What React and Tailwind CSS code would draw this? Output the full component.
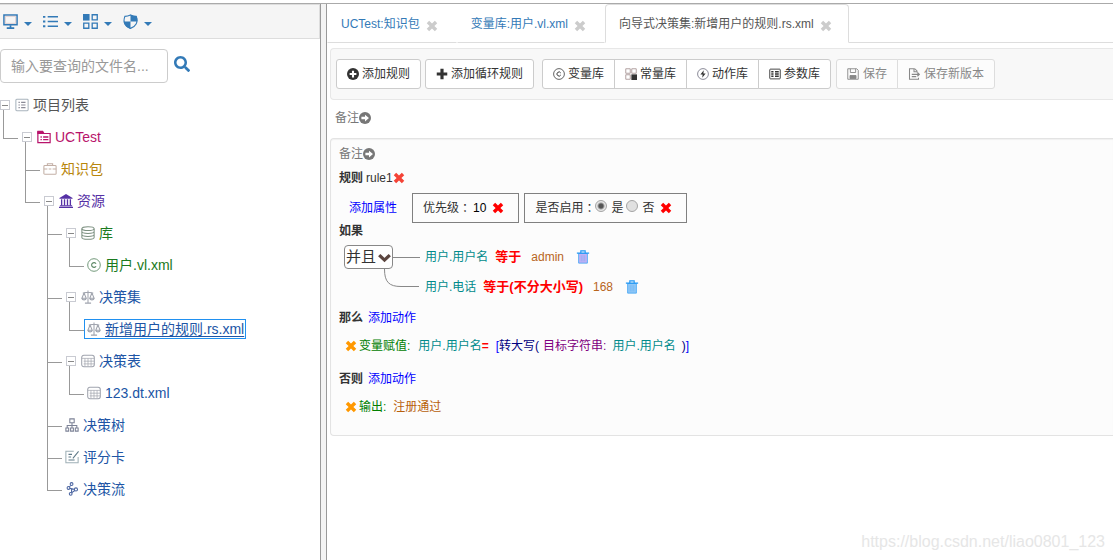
import clsx from 'clsx'
import { FaSearch } from 'react-icons/fa'

function Svg({ className, children }) {
  return (
    <svg
      viewBox="0 0 16 16"
      fill="none"
      stroke="currentColor"
      strokeWidth="1.2"
      aria-hidden="true"
      className={clsx('shrink-0', className)}
    >
      {children}
    </svg>
  )
}

function Cross({ className }) {
  return (
    <Svg className={className}>
      <path
        fill="currentColor"
        stroke="none"
        d="M4.2 1 8 4.8 11.8 1 15 4.2 11.2 8 15 11.8 11.8 15 8 11.2 4.2 15 1 11.8 4.8 8 1 4.2Z"
      />
    </Svg>
  )
}

const glyphs = {
  desktop: (
    <>
      <path d="M1 1h14v10.500H1Z" strokeWidth="1.600" />
      <path d="M8 12v2M4 15h8" strokeWidth="1.800" />
      <path d="M2.500 2.500h11v7.500h-11Z" fill="#f5f5f5" stroke="#d9c4c4" strokeWidth=".8" />
    </>
  ),
  list: (
    <>
      <path d="M5 3h11M5 8h11M5 13h11" strokeWidth="1.600" />
      <path d="M0 3h2.500M0 8h2.500M0 13h2.500" strokeWidth="2" />
    </>
  ),
  grid: (
    <>
      <path d="M0 0h7v7H0Z" fill="currentColor" stroke="none" />
      <path d="M9.800.8h5.400v5.400H9.800ZM.8 9.800h5.400v5.400H.8ZM9.800 9.800h5.400v5.400H9.800Z" strokeWidth="1.400" />
    </>
  ),
  shield: (
    <>
      <path d="M8 1C10 2 12 2.500 14 2.500 16.500 9 13.500 13.500 8 15.300 2.500 13.500-.5 9 2 2.500 4 2.500 6 2 8 1Z" />
      <path d="M8 .4C10 1.600 12 2 14.500 2 15.500 4 15.600 6 15.300 8H8ZM8 8V16C4 14.600 1.200 12 .7 8Z" fill="currentColor" stroke="none" />
    </>
  ),
  project: (
    <>
      <rect x="1" y="1.500" width="14" height="13" rx="1" stroke="#a9b4bd" />
      <path d="M4 5h1.500M4 8h1.500M4 11h1.500M7 5h5M7 8h5M7 11h5" stroke="#8a8a96" />
    </>
  ),
  folder: (
    <>
      <path d="M1 14.500V2h5l1 2h8v10.500Z" strokeWidth="1.400" />
      <path d="M1 1.500h5.500L8 4H1Z" fill="currentColor" />
      <path d="M4 8h1.500M7 8h6M4 11h1.500M7 11h6" strokeWidth="1.500" />
    </>
  ),
  briefcase: (
    <>
      <rect x="1" y="4" width="14" height="10" rx="1" />
      <path d="M5 4V2h6v2M1 8h4M6.500 8h3M11 8h4" />
    </>
  ),
  bank: (
    <>
      <path d="M8 0 15.500 4.500v1H.5v-1Z" fill="currentColor" stroke="none" />
      <path d="M3 6v7M6.300 6v7M9.700 6v7M13 6v7" strokeWidth="1.500" />
      <path d="M1 13.500h14M0 15.300h16" />
    </>
  ),
  database: (
    <>
      <ellipse cx="8" cy="3" rx="7" ry="2.200" />
      <path d="M1 3v10c0 3 14 3 14 0V3M1 6.300c0 3 14 3 14 0M1 9.700c0 3 14 3 14 0" />
    </>
  ),
  copyright: (
    <>
      <circle cx="8" cy="8" r="7.200" strokeWidth="1" />
      <path d="M10.300 6.600A2.700 2.700 0 1 0 10.300 9.400" strokeWidth="1.300" />
    </>
  ),
  scale: (
    <path d="M8 .5v14M4.500 15h7M2 3.500c3 0 4-1 6-1s3 1 6 1M3.500 3.500 1 9.500h5ZM12.500 3.500 10 9.500h5ZM1 9.500c.5 2.400 4.500 2.400 5 0M10 9.500c.5 2.400 4.500 2.400 5 0" />
  ),
  table: (
    <>
      <rect x=".8" y="1.500" width="14.400" height="13" rx="2.500" />
      <path d="M1 5h14M3 8.200h12M3 11.300h12M4.500 5v9M8 5v9M11.500 5v9" strokeWidth=".8" />
    </>
  ),
  tree: (
    <path d="M5.500 1h5v4.500h-5ZM8 5.500v6M2.500 11.500V8.500h11v3M1 11.500h3.200V15H1ZM6.400 11.500h3.200V15H6.400ZM11.800 11.500H15V15h-3.200Z" />
  ),
  card: (
    <>
      <path d="M10 1.500H1v13h14V8" stroke="#9fb0b6" />
      <path d="M4 5h4M4 8h3M4 11.500h7M9 9.500l6.500-8" />
    </>
  ),
  flow: (
    <>
      <circle cx="7.500" cy="2.300" r="1.600" />
      <circle cx="4" cy="6.800" r="1.600" />
      <circle cx="12.500" cy="8.500" r="1.800" />
      <circle cx="6.500" cy="13.500" r="1.600" />
      <path d="M6.500 4 5 5.500M5.500 7.300l5 1M7.500 12.500l3.700-2.800M7.500 7.500V12" />
    </>
  ),
  constant: (
    <>
      <path d="M1 1h6v6H1ZM9 1h6v6H9ZM1 9h6v6H1Z" stroke="#a99" />
      <path d="M8.500 8.500H16V16H8.500Z" fill="currentColor" stroke="none" />
    </>
  ),
  action: (
    <>
      <circle cx="8" cy="8" r="7.200" stroke="#667" strokeWidth="1" />
      <path d="M9 3 4.500 8.800h3L7 13l4.500-5.800h-3Z" fill="currentColor" stroke="none" />
    </>
  ),
  params: (
    <>
      <rect x="1" y="1.500" width="14" height="13" rx="1" />
      <path d="M3 5h3M3 8h3M3 11h3M8 5h5M8 8h5M8 11h5" strokeWidth="2" />
    </>
  ),
  save: (
    <>
      <path d="M1 1h12l2 2v12H1ZM4.500 1v5h7V1" />
      <path d="M4 10h8v4H4Z" fill="currentColor" />
    </>
  ),
  saveAs: (
    <>
      <path d="M9 1H2v14h12v-2M9 1l3 3v2M8 1v4h4" strokeWidth="1.400" />
      <path d="M5 8.500h10M5 11.500h6M12.500 6l2.500 2.500-2.500 2.500" strokeWidth="1.600" />
    </>
  ),
  plus: <path d="M8 1v14M1 8h14" strokeWidth="4.200" />,
  plusCircle: (
    <>
      <circle cx="8" cy="8" r="8" fill="currentColor" stroke="none" />
      <path d="M8 3.500v9M3.500 8h9" stroke="#fff" strokeWidth="2.800" />
    </>
  ),
  arrowCircle: (
    <>
      <circle cx="8" cy="8" r="8" fill="currentColor" stroke="none" />
      <path d="M8 3.500 13.300 8 8 12.500V9.800H3.200V6.200H8Z" fill="#fff" stroke="none" />
    </>
  ),
  chevron: <path d="M1.500 5 8 11.200 14.500 5" strokeWidth="4" />,
}

const menus = [
  ['desktop', '视图'],
  ['list', '列表'],
  ['grid', '分类'],
  ['shield', '权限'],
]

const tree = {
  icon: 'project',
  label: '项目列表',
  color: 'text-[#555]',
  children: [
    {
      icon: 'folder',
      label: 'UCTest',
      color: 'text-[#b8136b]',
      iconColor: 'text-[#b8136b]',
      children: [
        { icon: 'briefcase', label: '知识包', color: 'text-[#b8860b]', iconColor: 'text-[#c3b0a6]' },
        {
          icon: 'bank',
          label: '资源',
          color: 'text-[#5530a5]',
          iconColor: 'text-[#5530a5]',
          children: [
            {
              icon: 'database',
              label: '库',
              color: 'text-[#1a7a20]',
              iconColor: 'text-[#7c9080]',
              children: [
                { icon: 'copyright', label: '用户.vl.xml', color: 'text-[#1a7a20]', iconColor: 'text-[#5f8a68]' },
              ],
            },
            {
              icon: 'scale',
              label: '决策集',
              color: 'text-[#2055a5]',
              children: [
                { icon: 'scale', label: '新增用户的规则.rs.xml', color: 'text-[#2055a5]', active: true },
              ],
            },
            {
              icon: 'table',
              label: '决策表',
              color: 'text-[#2055a5]',
              children: [{ icon: 'table', label: '123.dt.xml', color: 'text-[#2055a5]' }],
            },
            { icon: 'tree', label: '决策树', color: 'text-[#2055a5]', iconColor: 'text-[#7c8296]' },
            { icon: 'card', label: '评分卡', color: 'text-[#2055a5]', iconColor: 'text-[#5f7a88]' },
            { icon: 'flow', label: '决策流', color: 'text-[#2055a5]', iconColor: 'text-[#4a64a0]' },
          ],
        },
      ],
    },
  ],
}

function TreeNode({ node }) {
  const { icon, label, color, iconColor = 'text-[#a0a4ae]', active, children } = node

  return (
    <div>
      <div className="flex h-8">
        {children && (
          <div className="mr-1 flex w-[10px] flex-col pt-[11px]">
            <button
              type="button"
              aria-label={`折叠${label}`}
              className="flex size-[10px] items-center border border-[#c9cbd2] px-px"
            >
              <span className="h-px w-full bg-[#888]" />
            </button>
            <span className="ml-[3px] flex-1 border-l border-[#999]" />
          </div>
        )}
        <a
          href="#"
          className={clsx(
            'my-auto flex h-5 items-center gap-1 whitespace-nowrap border pr-px text-sm leading-[18px]',
            !children && 'pl-0.5',
            active ? 'border-[#2090f0]' : 'border-transparent',
            color,
          )}
        >
          <Svg className={clsx('size-[14px]', iconColor)}>{glyphs[icon]}</Svg>
          <span className={clsx(active && 'underline underline-offset-2')}>{label}</span>
        </a>
      </div>
      {children && (
        <ul className="pl-[3px]">
          {children.map((child, i) => (
            <li key={child.label} className="flex">
              <div className={clsx('flex w-[15px] shrink-0 flex-col', child.children && 'mr-1')}>
                <span className="h-[18px] border-b border-l border-[#999]" />
                {i < children.length - 1 && <span className="flex-1 border-l border-[#999]" />}
              </div>
              <TreeNode node={child} />
            </li>
          ))}
        </ul>
      )}
    </div>
  )
}

function Sidebar() {
  return (
    <aside className="w-80 shrink-0">
      <div className="flex h-[35px] items-center border-y border-r border-[#ddd] bg-[#f5f5f5] pl-[3px] text-[#337ab7]">
        {menus.map(([icon, label]) => (
          <button key={icon} type="button" aria-label={label} className="flex w-10 items-center gap-1.5">
            <Svg className="size-[15px]">{glyphs[icon]}</Svg>
            <span className="mt-1 border-x-4 border-t-4 border-x-transparent border-t-[#337ab7]" />
          </button>
        ))}
      </div>
      <form className="mt-2.5 flex gap-1.5">
        <input
          type="text"
          aria-label="文件名"
          placeholder="输入要查询的文件名..."
          className="h-[34px] w-[168px] rounded border border-[#ccc] px-2.5 text-sm placeholder:text-[#999]"
        />
        <button type="button" aria-label="查询" className="pb-1 text-[#337ab7]">
          <FaSearch className="size-4" />
        </button>
      </form>
      <nav className="pt-1.5">
        <TreeNode node={tree} />
      </nav>
    </aside>
  )
}

function Tab({ label, active }) {
  return (
    <div
      className={clsx(
        'flex h-[39px] items-center gap-1.5 border pl-[13px]',
        active
          ? 'rounded-t border-[#ddd] border-b-white bg-white pr-4 text-[#555]'
          : 'border-transparent border-b-[#ddd] pr-[18px] text-[#337ab7]',
      )}
    >
      <button type="button" className="whitespace-nowrap">{label}</button>
      <button type="button" aria-label={`关闭${label}`} className="mt-1 text-[#ccc]">
        <Cross className="size-3" />
      </button>
    </div>
  )
}

function ToolButton({ icon, disabled, children }) {
  return (
    <button
      type="button"
      disabled={disabled}
      className={clsx(
        '-ml-px flex h-[30px] items-center whitespace-nowrap border px-2.5 first:ml-0 first:rounded-l-[3px] last:rounded-r-[3px]',
        disabled ? 'gap-1 border-[#ddd] bg-[#fcfcfc] text-[#888]' : 'gap-[3px] border-[#ccc] bg-white text-[#333]',
      )}
    >
      <Svg className="size-3">{glyphs[icon]}</Svg>
      {children}
    </button>
  )
}

function Remark() {
  return (
    <button type="button" className="flex h-[18px] items-center text-[#777]">
      备注
      <Svg className="size-3">{glyphs.arrowCircle}</Svg>
    </button>
  )
}

function Remove({ label, className = 'text-[#f00]' }) {
  return (
    <button type="button" aria-label={label} className={className}>
      <Cross className="size-3" />
    </button>
  )
}

function Colon() {
  return <span className="font-['Noto_Sans_CJK_TC',sans-serif]">：</span>
}

function Condition({ field, op, value, fill }) {
  return (
    <li className="flex h-[30px] items-center whitespace-nowrap">
      <span className="text-[#008b8b]">{field}</span>
      <button type="button" className="ml-[7px] text-[13px] font-bold text-[#f00]">{op}</button>
      <span className="ml-2.5 text-[#b8651b]">{value}</span>
      <button type="button" aria-label="删除条件" className="ml-3">
        <Svg className="size-[14px] text-[#4aa8f5]">
          <path d="M3 4h10v11H3Z" className={fill} strokeWidth="1" />
          <path d="M1 3.500h14M5.500 3V1h5v2" stroke="#2196f3" strokeWidth="1.300" />
          <path d="M6 6v7M8 6v7M10 6v7" strokeWidth=".4" />
        </Svg>
      </button>
    </li>
  )
}

function RulePanel() {
  return (
    <section className="ml-[3px] mt-[11px] h-[298px] rounded-l border border-r-0 border-[#e3e3e3] bg-[#fcfcfc] pl-2 pt-1.5 shadow-[inset_0_1px_1px_rgba(0,0,0,0.05)]">
      <Remark />
      <div className="mt-1.5 flex h-[18px] items-center">
        <b className="mr-[3px]">规则</b>rule1
        <Remove label="删除规则" className="text-[#f44336]" />
      </div>

      <div className="mt-1.5 flex h-[30px] items-center whitespace-nowrap pl-2.5">
        <a href="#" className="mr-[15px] text-[#00f]">添加属性</a>
        <div className="mr-[5px] flex h-full items-center border border-[#808080] px-2.5">
          优先级
          <Colon />
          <span className="ml-0.5 mr-1.5 text-black">10</span>
          <Remove label="删除优先级" />
          <span className="w-1" />
        </div>
        <div className="flex h-full items-center border border-[#808080] px-2.5">
          是否启用
          <Colon />
          <label className="flex items-center gap-1">
            <input
              type="radio"
              name="enabled"
              defaultChecked
              className="mb-1 size-3 appearance-none rounded-full border border-[#a5a5a5] bg-[#e6e6e6] checked:bg-[radial-gradient(circle,#555_0_2px,#e6e6e6_4px)]"
            />
            是
          </label>
          <label className="ml-[3px] flex items-center gap-1">
            <input
              type="radio"
              name="enabled"
              className="mb-1 size-3 appearance-none rounded-full border border-[#a5a5a5] bg-[#e0e0e0] checked:bg-[radial-gradient(circle,#555_0_2px,#e6e6e6_4px)]"
            />
            否
          </label>
          <span className="w-1.5" />
          <Remove label="删除是否启用" />
          <span className="w-1" />
        </div>
      </div>

      <b className="block leading-4">如果</b>
      <div className="flex pl-[5px]">
        <div className="w-[81px] pt-1.5">
          <div className="flex items-center">
            <label className="flex h-6 w-[49px] items-center gap-px rounded border border-[#888] bg-white pl-px">
              <select aria-label="条件关系" className="w-[31px] appearance-none text-[15px] leading-5">
                <option>并且</option>
                <option>或者</option>
              </select>
              <Svg className="size-[13px] text-[#5c4640]">{glyphs.chevron}</Svg>
            </label>
            <span className="w-[27px] border-t border-[#888]" />
          </div>
          <svg viewBox="0 0 36 19" fill="none" stroke="#888" className="ml-10 h-[19px] w-9" aria-hidden="true">
            <path d="M.5 0C.5 13 5 17.500 17 17.500H35" />
          </svg>
        </div>
        <ul className="pt-[3px]">
          <Condition field="用户.用户名" op="等于" value="admin" fill="fill-[#c3b1f5]" />
          <Condition field="用户.电话" op="等于(不分大小写)" value="168" fill="fill-[#8fc7f7]" />
        </ul>
      </div>

      <div className="mt-[7px] flex h-[18px] items-center gap-[5px]">
        <b>那么</b>
        <a href="#" className="text-[#00f]">添加动作</a>
      </div>
      <div className="mt-2.5 flex h-[18px] items-center whitespace-nowrap pl-1.5">
        <Remove label="删除动作" className="mr-0.5 text-[#ff9800]" />
        <span className="mr-2 text-[#008000]">变量赋值:</span>
        <span className="text-[#008b8b]">用户.用户名</span>
        <b className="mr-[7px] text-[#f00]">=</b>
        <span className="text-[#00f]">[</span>
        <span className="mr-1 text-[#000080]">转大写(</span>
        <span className="mr-1.5 text-[#800080]">目标字符串:</span>
        <span className="mr-1.5 text-[#008b8b]">用户.用户名</span>
        <span className="text-[#000080]">)</span>
        <span className="text-[#00f]">]</span>
      </div>
      <div className="mt-[15px] flex h-[18px] items-center gap-[5px]">
        <b>否则</b>
        <a href="#" className="text-[#00f]">添加动作</a>
      </div>
      <div className="mt-2.5 flex h-[18px] items-center pl-1.5">
        <Remove label="删除动作" className="mr-0.5 text-[#ff9800]" />
        <span className="mr-[7px] text-[#008000]">输出:</span>
        <span className="text-[#b8600b]">注册通过</span>
      </div>
    </section>
  )
}

export default function App() {
  return (
    <div className="relative flex min-h-screen flex-col bg-white pt-[3px] font-['Liberation_Sans','Noto_Sans_CJK_SC',sans-serif] text-xs text-[#333]">
      <div className="flex flex-1 border-t border-[#aaa]">
        <Sidebar />
        <div className="w-[7px] shrink-0 border-x border-[#999] bg-[#f3f3f3]" />
        <main className="min-w-0 flex-1">
          <div className="flex">
            <Tab label="UCTest:知识包" />
            <Tab label="变量库:用户.vl.xml" />
            <Tab label="向导式决策集:新增用户的规则.rs.xml" active />
            <span className="flex-1 border-b border-[#ddd]" />
          </div>
          <div className="ml-[3px] mt-[5px] flex h-[52px] items-center rounded-l border border-r-0 border-[#e7e7e7] bg-[#f8f8f8] pl-[5px]">
            <div className="mr-1 flex">
              <ToolButton icon="plusCircle">添加规则</ToolButton>
            </div>
            <div className="mr-2 flex">
              <ToolButton icon="plus">添加循环规则</ToolButton>
            </div>
            <div className="mr-[5px] flex">
              <ToolButton icon="copyright">变量库</ToolButton>
              <ToolButton icon="constant">常量库</ToolButton>
              <ToolButton icon="action">动作库</ToolButton>
              <ToolButton icon="params">参数库</ToolButton>
            </div>
            <div className="flex">
              <ToolButton icon="save" disabled>保存</ToolButton>
              <ToolButton icon="saveAs" disabled>保存新版本</ToolButton>
            </div>
          </div>
          <div className="mt-[9px] pl-2">
            <Remark />
          </div>
          <RulePanel />
        </main>
      </div>
      <span className="absolute bottom-2 right-2 text-base leading-5 text-[#e6e6e6]">
        https://blog.csdn.net/liao0801_123
      </span>
    </div>
  )
}
